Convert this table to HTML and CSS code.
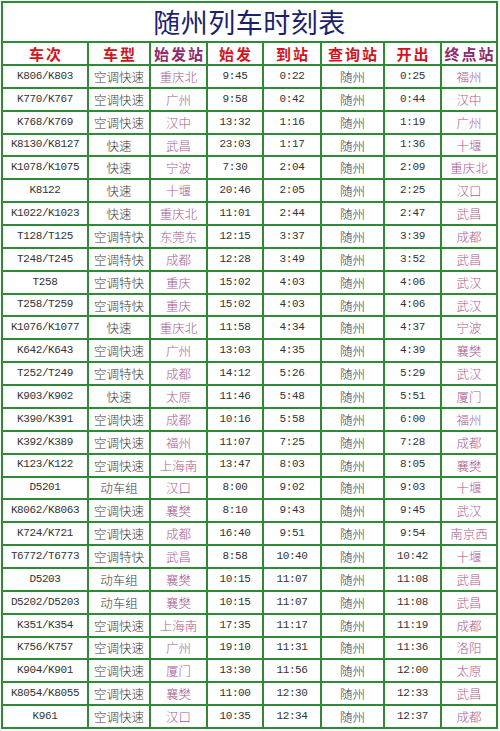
FILE: index.html
```html
<!DOCTYPE html>
<html lang="zh">
<head>
<meta charset="utf-8">
<link rel="stylesheet" href="styles.css">
</head>
<body>
<div class="sheet">
  <div class="title"><span class="title-text">随州列车时刻表</span></div>
  <div class="hd">车次</div><div class="hd">车型</div><div class="hd alt">始发站</div><div class="hd">始发</div><div class="hd">到站</div><div class="hd">查询站</div><div class="hd">开出</div><div class="hd alt">终点站</div>

  <div class="c n">K806/K803</div><div class="c">空调快速</div><div class="c s">重庆北</div><div class="c n">9:45</div><div class="c n">0:22</div><div class="c">随州</div><div class="c n">0:25</div><div class="c s">福州</div>
  <div class="c n">K770/K767</div><div class="c">空调快速</div><div class="c s">广州</div><div class="c n">9:58</div><div class="c n">0:42</div><div class="c">随州</div><div class="c n">0:44</div><div class="c s">汉中</div>
  <div class="c n">K768/K769</div><div class="c">空调快速</div><div class="c s">汉中</div><div class="c n">13:32</div><div class="c n">1:16</div><div class="c">随州</div><div class="c n">1:19</div><div class="c s">广州</div>
  <div class="c n">K8130/K8127</div><div class="c">快速</div><div class="c s">武昌</div><div class="c n">23:03</div><div class="c n">1:17</div><div class="c">随州</div><div class="c n">1:36</div><div class="c s">十堰</div>
  <div class="c n">K1078/K1075</div><div class="c">快速</div><div class="c s">宁波</div><div class="c n">7:30</div><div class="c n">2:04</div><div class="c">随州</div><div class="c n">2:09</div><div class="c s">重庆北</div>
  <div class="c n">K8122</div><div class="c">快速</div><div class="c s">十堰</div><div class="c n">20:46</div><div class="c n">2:05</div><div class="c">随州</div><div class="c n">2:25</div><div class="c s">汉口</div>
  <div class="c n">K1022/K1023</div><div class="c">快速</div><div class="c s">重庆北</div><div class="c n">11:01</div><div class="c n">2:44</div><div class="c">随州</div><div class="c n">2:47</div><div class="c s">武昌</div>
  <div class="c n">T128/T125</div><div class="c">空调特快</div><div class="c s">东莞东</div><div class="c n">12:15</div><div class="c n">3:37</div><div class="c">随州</div><div class="c n">3:39</div><div class="c s">成都</div>
  <div class="c n">T248/T245</div><div class="c">空调特快</div><div class="c s">成都</div><div class="c n">12:28</div><div class="c n">3:49</div><div class="c">随州</div><div class="c n">3:52</div><div class="c s">武昌</div>
  <div class="c n">T258</div><div class="c">空调特快</div><div class="c s">重庆</div><div class="c n">15:02</div><div class="c n">4:03</div><div class="c">随州</div><div class="c n">4:06</div><div class="c s">武汉</div>
  <div class="c n">T258/T259</div><div class="c">空调特快</div><div class="c s">重庆</div><div class="c n">15:02</div><div class="c n">4:03</div><div class="c">随州</div><div class="c n">4:06</div><div class="c s">武汉</div>
  <div class="c n">K1076/K1077</div><div class="c">快速</div><div class="c s">重庆北</div><div class="c n">11:58</div><div class="c n">4:34</div><div class="c">随州</div><div class="c n">4:37</div><div class="c s">宁波</div>
  <div class="c n">K642/K643</div><div class="c">空调快速</div><div class="c s">广州</div><div class="c n">13:03</div><div class="c n">4:35</div><div class="c">随州</div><div class="c n">4:39</div><div class="c s">襄樊</div>
  <div class="c n">T252/T249</div><div class="c">空调特快</div><div class="c s">成都</div><div class="c n">14:12</div><div class="c n">5:26</div><div class="c">随州</div><div class="c n">5:29</div><div class="c s">武汉</div>
  <div class="c n">K903/K902</div><div class="c">快速</div><div class="c s">太原</div><div class="c n">11:46</div><div class="c n">5:48</div><div class="c">随州</div><div class="c n">5:51</div><div class="c s">厦门</div>
  <div class="c n">K390/K391</div><div class="c">空调快速</div><div class="c s">成都</div><div class="c n">10:16</div><div class="c n">5:58</div><div class="c">随州</div><div class="c n">6:00</div><div class="c s">福州</div>
  <div class="c n">K392/K389</div><div class="c">空调快速</div><div class="c s">福州</div><div class="c n">11:07</div><div class="c n">7:25</div><div class="c">随州</div><div class="c n">7:28</div><div class="c s">成都</div>
  <div class="c n">K123/K122</div><div class="c">空调快速</div><div class="c s">上海南</div><div class="c n">13:47</div><div class="c n">8:03</div><div class="c">随州</div><div class="c n">8:05</div><div class="c s">襄樊</div>
  <div class="c n">D5201</div><div class="c">动车组</div><div class="c s">汉口</div><div class="c n">8:00</div><div class="c n">9:02</div><div class="c">随州</div><div class="c n">9:03</div><div class="c s">十堰</div>
  <div class="c n">K8062/K8063</div><div class="c">空调快速</div><div class="c s">襄樊</div><div class="c n">8:10</div><div class="c n">9:43</div><div class="c">随州</div><div class="c n">9:45</div><div class="c s">武汉</div>
  <div class="c n">K724/K721</div><div class="c">空调快速</div><div class="c s">成都</div><div class="c n">16:40</div><div class="c n">9:51</div><div class="c">随州</div><div class="c n">9:54</div><div class="c s">南京西</div>
  <div class="c n">T6772/T6773</div><div class="c">空调特快</div><div class="c s">武昌</div><div class="c n">8:58</div><div class="c n">10:40</div><div class="c">随州</div><div class="c n">10:42</div><div class="c s">十堰</div>
  <div class="c n">D5203</div><div class="c">动车组</div><div class="c s">襄樊</div><div class="c n">10:15</div><div class="c n">11:07</div><div class="c">随州</div><div class="c n">11:08</div><div class="c s">武昌</div>
  <div class="c n">D5202/D5203</div><div class="c">动车组</div><div class="c s">襄樊</div><div class="c n">10:15</div><div class="c n">11:07</div><div class="c">随州</div><div class="c n">11:08</div><div class="c s">武昌</div>
  <div class="c n">K351/K354</div><div class="c">空调快速</div><div class="c s">上海南</div><div class="c n">17:35</div><div class="c n">11:17</div><div class="c">随州</div><div class="c n">11:19</div><div class="c s">成都</div>
  <div class="c n">K756/K757</div><div class="c">空调快速</div><div class="c s">广州</div><div class="c n">19:10</div><div class="c n">11:31</div><div class="c">随州</div><div class="c n">11:36</div><div class="c s">洛阳</div>
  <div class="c n">K904/K901</div><div class="c">空调快速</div><div class="c s">厦门</div><div class="c n">13:30</div><div class="c n">11:56</div><div class="c">随州</div><div class="c n">12:00</div><div class="c s">太原</div>
  <div class="c n">K8054/K8055</div><div class="c">空调快速</div><div class="c s">襄樊</div><div class="c n">11:00</div><div class="c n">12:30</div><div class="c">随州</div><div class="c n">12:33</div><div class="c s">武昌</div>
  <div class="c n">K961</div><div class="c">空调快速</div><div class="c s">汉口</div><div class="c n">10:35</div><div class="c n">12:34</div><div class="c">随州</div><div class="c n">12:37</div><div class="c s">成都</div>
</div>
</body>
</html>
```
FILE: styles.css
```css
html, body {
  margin: 0;
  padding: 0;
  background: #ffffff;
}
body {
  padding: 1px 0 0 1px;
}
.sheet {
  box-sizing: border-box;
  width: 497px;
  height: 728px;
  padding: 2px;
  background: #2f8a35;
  display: grid;
  grid-template-columns: 84px 60px 55px 54px 56px 61px 55px 54px;
  grid-template-rows: 38px 21px repeat(29, 1fr);
  gap: 2px;
  font-family: "Noto Sans CJK SC", sans-serif;
}
.sheet > div {
  background: #ffffff;
  display: flex;
  align-items: center;
  justify-content: center;
  white-space: nowrap;
  line-height: 1.2;
}
.title {
  grid-column: 1 / -1;
}
.title-text {
  font-size: 27px;
  line-height: 32px;
  letter-spacing: 0.5px;
  color: #1c1f6e;
  font-weight: 400;
}
.hd {
  font-size: 15px;
  font-weight: 700;
  color: #d0161c;
  letter-spacing: 2px;
  padding-left: 2px;
}
.hd.alt {
  color: #8e2b6c;
}
.c {
  font-size: 12.5px;
  color: #3a3a3a;
  font-weight: 300;
}
.c.n {
  font-family: "Liberation Mono", monospace;
  font-size: 11px;
  font-weight: 400;
  letter-spacing: -0.4px;
  color: #333333;
}
.c.s {
  color: #a95a8d;
}
```
